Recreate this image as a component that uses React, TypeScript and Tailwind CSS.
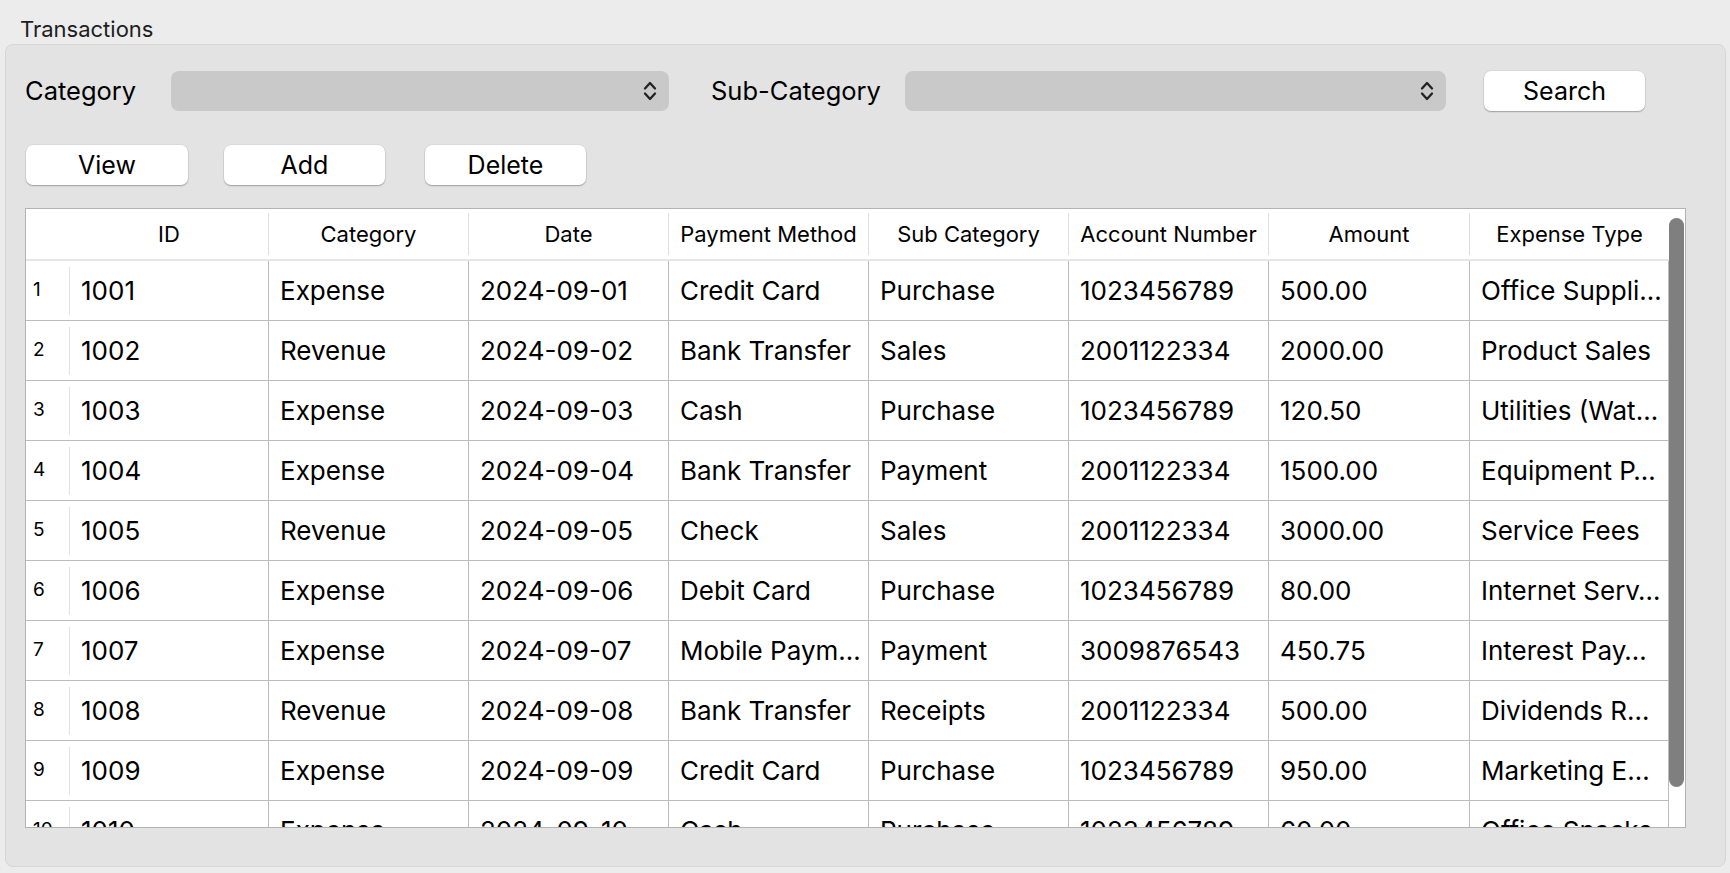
import React from "react";

const columns = [
  { name: "ID", w: "w-[199px]" },
  { name: "Category", w: "w-[200px]" },
  { name: "Date", w: "w-[200px]" },
  { name: "Payment Method", w: "w-[200px]" },
  { name: "Sub Category", w: "w-[200px]" },
  { name: "Account Number", w: "w-[200px]" },
  { name: "Amount", w: "w-[201px]" },
  { name: "Expense Type", w: "w-[199px]" },
];

// text as the grid shows it (cut with an ellipsis where the column is too narrow)
const rows: string[][] = [
  ["1001", "Expense", "2024-09-01", "Credit Card", "Purchase", "1023456789", "500.00", "Office Suppli…"],
  ["1002", "Revenue", "2024-09-02", "Bank Transfer", "Sales", "2001122334", "2000.00", "Product Sales"],
  ["1003", "Expense", "2024-09-03", "Cash", "Purchase", "1023456789", "120.50", "Utilities (Wat…"],
  ["1004", "Expense", "2024-09-04", "Bank Transfer", "Payment", "2001122334", "1500.00", "Equipment P…"],
  ["1005", "Revenue", "2024-09-05", "Check", "Sales", "2001122334", "3000.00", "Service Fees"],
  ["1006", "Expense", "2024-09-06", "Debit Card", "Purchase", "1023456789", "80.00", "Internet Serv…"],
  ["1007", "Expense", "2024-09-07", "Mobile Paym…", "Payment", "3009876543", "450.75", "Interest Pay…"],
  ["1008", "Revenue", "2024-09-08", "Bank Transfer", "Receipts", "2001122334", "500.00", "Dividends R…"],
  ["1009", "Expense", "2024-09-09", "Credit Card", "Purchase", "1023456789", "950.00", "Marketing E…"],
  ["1010", "Expense", "2024-09-10", "Cash", "Purchase", "1023456789", "60.00", "Office Snacks"],
];

function Chevrons() {
  return (
    <svg width="16" height="24" viewBox="0 0 16 24" fill="none" stroke="#222" strokeWidth="2.3" strokeLinecap="round" strokeLinejoin="round">
      <path d="M3 9.5 L8 4 L13 9.5" />
      <path d="M3 14.5 L8 20 L13 14.5" />
    </svg>
  );
}

function Combo({ w }: { w: string }) {
  return (
    <div className={`${w} h-[40px] bg-[#c9c9c9] rounded-[8px] flex items-center justify-end pr-[11px]`}>
      <Chevrons />
    </div>
  );
}

function Btn({ label, w = "w-[161px]" }: { label: string; w?: string }) {
  return (
    <button className={`${w} h-[40px] bg-white rounded-[7px] shadow-[0_1px_1.5px_rgba(0,0,0,0.28),0_0_0_0.5px_rgba(0,0,0,0.08)] text-[25px] text-black leading-none`}>
      {label}
    </button>
  );
}

export default function App() {
  return (
    <div className="w-[1730px] h-[873px] bg-[#ececec] font-['Inter','Liberation_Sans',sans-serif] text-black overflow-hidden">
      <div className="h-[44px] pl-[20px] pt-[17px] text-[22px] leading-[24px] text-[#1d1d1d]">Transactions</div>

      <div className="ml-[5px] w-[1721px] h-[823px] bg-[#e3e3e3] border border-[#d6d6d6] rounded-[8px] pt-[26px]">
        {/* filters */}
        <div className="flex items-center h-[40px]">
          <div className="w-[165px] pl-[19px] text-[25.5px]">Category</div>
          <Combo w="w-[498px]" />
          <div className="w-[236px] pl-[42px] text-[25.5px]">Sub-Category</div>
          <Combo w="w-[541px]" />
          <div className="ml-[38px]">
            <Btn label="Search" />
          </div>
        </div>

        {/* actions */}
        <div className="flex items-center gap-[36px] pl-[20px] mt-[34px]">
          <Btn label="View" w="w-[162px]" />
          <Btn label="Add" />
          <div className="ml-[4px]">
            <Btn label="Delete" />
          </div>
        </div>

        {/* grid */}
        <div className="ml-[19px] mt-[23px] w-[1661px] h-[620px] border border-[#b3b3b3] bg-white flex">
          <div className="w-[1643px] overflow-hidden">
            <div className="flex h-[52px] border-b-2 border-[#e6e6e6]">
              <div className="w-[44px]" />
              {columns.map((c, i) => (
                <div key={c.name} className={`${c.w} flex items-center`}>
                  <div className="flex-1 text-center text-[22px] truncate">{c.name}</div>
                  {i < columns.length - 1 && <div className="w-px h-[42px] bg-[#dedede]" />}
                </div>
              ))}
            </div>
            {rows.map((r, ri) => (
              <div key={ri} className="flex h-[60px] border-b border-[#bcbcbc]">
                <div className="w-[44px] flex items-center">
                  <div className="flex-1 pl-[7px] text-[19px]">{ri + 1}</div>
                  <div className="w-px h-[48px] bg-[#e2e2e2]" />
                </div>
                {r.map((v, ci) => (
                  <div key={ci} className={`${columns[ci].w} flex items-center pl-[11px] border-r border-[#bcbcbc] text-[26px] whitespace-nowrap overflow-hidden`}>
                    {v}
                  </div>
                ))}
              </div>
            ))}
          </div>
          <div className="w-[16px] pt-[9px] pr-[1px]">
            <div className="h-[569px] bg-[#7f7f7f] rounded-[8px]" />
          </div>
        </div>
      </div>
    </div>
  );
}
